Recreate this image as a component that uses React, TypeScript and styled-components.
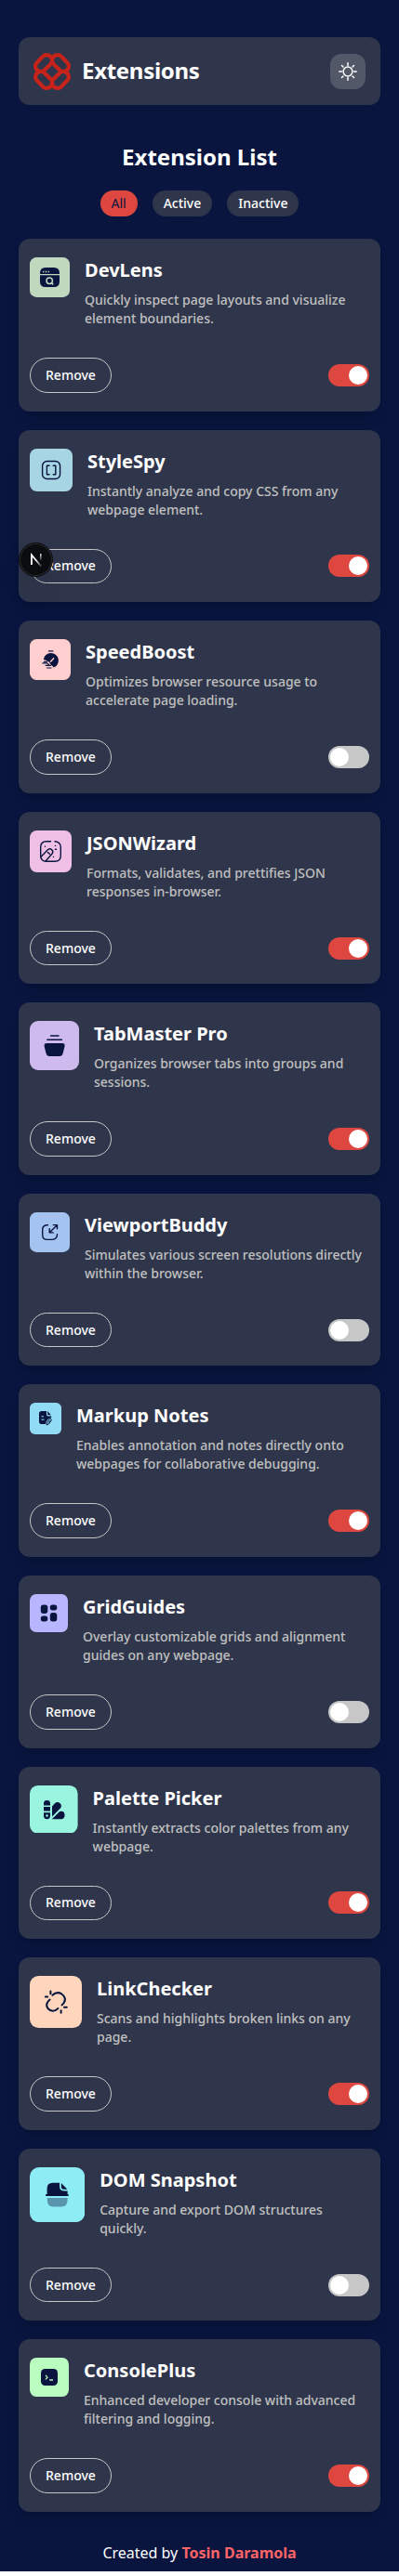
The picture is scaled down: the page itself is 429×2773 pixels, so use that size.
import React, { useState } from "react";
import styled, { createGlobalStyle } from "styled-components";

const GlobalStyle = createGlobalStyle`
  * { box-sizing: border-box; margin: 0; padding: 0; }
  html { background: #fff; }
  body { font-family: "Noto Sans", sans-serif; color: #fff; }
  button { font: inherit; color: inherit; cursor: pointer; }
`;

const navy = "#09153e";

const Page = styled.div`
  display: flex;
  flex-direction: column;
  height: 2768px;
  padding: 40px 20px 0;
  background: ${navy};
`;

const Header = styled.header`
  display: flex;
  flex: none;
  align-items: center;
  justify-content: space-between;
  height: 73px;
  padding: 0 16px;
  border-radius: 12px;
  background: #2f364b;
`;

const Brand = styled.div`
  display: flex;
  align-items: center;
  gap: 12px;
`;

const BrandName = styled.span`
  margin-top: -1px;
  font-size: 24px;
  font-weight: 700;
  letter-spacing: -0.3px;
  line-height: 40px;
`;

const ThemeButton = styled.button`
  display: grid;
  place-items: center;
  width: 38px;
  height: 38px;
  border: 0;
  border-radius: 12px;
  background: #535868;
`;

const Heading = styled.h1`
  margin-top: 40px;
  font-size: 24px;
  font-weight: 700;
  line-height: 32px;
  text-align: center;
`;

const Filters = styled.div`
  display: flex;
  justify-content: center;
  gap: 16px;
  margin: 20px 0 24px;
`;

const FilterPill = styled.button<{ $selected: boolean }>`
  height: 28px;
  padding: 0 12px;
  border: 0;
  border-radius: 14px;
  font-size: 14px;
  font-weight: ${(p) => (p.$selected ? 400 : 500)};
  line-height: 20px;
  color: ${(p) => (p.$selected ? navy : "#fff")};
  background: ${(p) => (p.$selected ? "#de473f" : "#2f364b")};
`;

const List = styled.main`
  display: flex;
  flex-direction: column;
  gap: 20px;
`;

const Card = styled.article`
  display: flex;
  flex-direction: column;
  gap: 32px;
  padding: 20px 12px;
  border-radius: 12px;
  background: #2f364b;
  box-shadow: 0 10px 15px -3px rgba(0, 0, 0, 0.1), 0 4px 6px -4px rgba(0, 0, 0, 0.1);
`;

const CardBody = styled.div`
  display: flex;
  align-items: flex-start;
  gap: 16px;
`;

const Tile = styled.svg<{ $size: number }>`
  flex: none;
  display: block;
  width: ${(p) => p.$size}px;
  height: ${(p) => p.$size}px;
`;

const CardText = styled.div`
  display: flex;
  flex-direction: column;
  gap: 8px;
`;

const CardTitle = styled.h2`
  font-size: 20px;
  font-weight: 700;
  line-height: 28px;
`;

const CardDescription = styled.p`
  font-size: 14px;
  font-weight: 500;
  line-height: 20px;
  color: #c0c0c0;
`;

const CardFooter = styled.div`
  position: relative;
  display: flex;
  align-items: center;
  justify-content: space-between;
`;

const RemoveButton = styled.button`
  height: 37.59px;
  padding: 0 16px;
  border: 1px solid #c7c7c7;
  border-radius: 19px;
  background: transparent;
  font-size: 14px;
  font-weight: 500;
  line-height: 20px;
`;

const Switch = styled.button<{ $on: boolean }>`
  display: flex;
  align-items: center;
  justify-content: ${(p) => (p.$on ? "flex-end" : "flex-start")};
  width: 44px;
  height: 24px;
  padding: 2px;
  border: 0;
  border-radius: 12px;
  background: ${(p) => (p.$on ? "#de473f" : "#c7c7c7")};
`;

const Knob = styled.span`
  width: 20px;
  height: 20px;
  border-radius: 50%;
  background: #fff;
`;

const DevBadge = styled.div`
  position: absolute;
  left: -12px;
  top: -6.5px;
  width: 37px;
  height: 37px;
  display: grid;
  place-items: center;
  border-radius: 50%;
  background: #0b0c0f;
  border: 1px solid #0b0c0f;
  box-shadow: inset 0 0 0 1px #2c2d31, 0 16px 32px -8px rgba(0, 0, 0, 0.24);
`;

const Footer = styled.footer`
  margin-top: 32px;
  font-size: 16px;
  line-height: 24px;
  text-align: center;
`;

const Author = styled.strong`
  font-weight: 700;
  color: #ff6467;
`;

const LogoMark = () => (
  <svg width="40" height="40" viewBox="0 0 40 40" fill="none" stroke="#c7231a" strokeWidth="4.2" strokeLinejoin="round">
    {[0, 90, 180, 270].map((a) => (
      <path
        key={a}
        transform={`rotate(${a} 20 20)`}
        d="M3.6 10.4L10.4 3.6Q11.9 2.1 13.8 2.1Q17.4 2.1 19 4.8Q20 6.6 20 8.4Q20 10.3 18.6 11.7L11.7 18.6Q10.3 20 8.4 20Q6.6 20 4.8 19Q2.1 17.4 2.1 13.8Q2.1 11.9 3.6 10.4Z"
      />
    ))}
  </svg>
);

const SunIcon = () => (
  <svg width="22" height="22" viewBox="0 0 22 22" fill="none" stroke="#fff" strokeWidth="1.5" strokeLinecap="round">
    <circle cx="11" cy="11" r="4.9" />
    <path d="M11 1.8v2.6M11 17.6v2.6M1.8 11h2.6M17.6 11h2.6M4.5 4.5l1.5 1.5M16 16l1.5 1.5M4.5 17.5l1.5-1.5M16 6l1.5-1.5" />
  </svg>
);

const NextMark = () => (
  <svg width="14" height="15" viewBox="0 0 14 15" fill="none" strokeWidth="1.6">
    <defs>
      <linearGradient id="diag" x1="7" y1="8" x2="12.5" y2="14.5" gradientUnits="userSpaceOnUse">
        <stop stopColor="#fff" />
        <stop offset="1" stopColor="#fff" stopOpacity="0.15" />
      </linearGradient>
      <linearGradient id="bar" x1="0" y1="1" x2="0" y2="9" gradientUnits="userSpaceOnUse">
        <stop stopColor="#fff" />
        <stop offset="1" stopColor="#fff" stopOpacity="0" />
      </linearGradient>
    </defs>
    <path d="M1.8 13V2.2L12.2 14.6" stroke="url(#diag)" />
    <path d="M1.8 13V1.4" stroke="#fff" />
    <rect x="11" y="1.2" width="1.5" height="8" fill="url(#bar)" />
  </svg>
);

type Item = {
  name: string;
  text: string;
  size: number;
  color: string;
  on: boolean;
  art: React.ReactNode;
};

const line = { fill: "none", stroke: navy, strokeLinecap: "round" as const, strokeLinejoin: "round" as const };

const items: Item[] = [
  {
    name: "DevLens",
    text: "Quickly inspect page layouts and visualize element boundaries.",
    size: 43,
    color: "#c0d8bd",
    on: true,
    art: (
      <>
        <path fill={navy} d="M11 18V17Q11 11 17 11H26Q32 11 32 17V18ZM11 19.3H32V26Q32 32 26 32H17Q11 32 11 26Z" />
        <path d="M14 15.5h1.4M16.8 15.5h1.4M19.6 15.5h1.4" stroke="#c0d8bd" strokeWidth="1.5" />
        <g fill="none" stroke="#c0d8bd" strokeWidth="1.5">
          <circle cx="21.2" cy="25.3" r="3.2" />
          <path d="M23.2 27.4L25.2 29.4" />
        </g>
      </>
    ),
  },
  {
    name: "StyleSpy",
    text: "Instantly analyze and copy CSS from any webpage element.",
    size: 46,
    color: "#a8d5e3",
    on: true,
    art: (
      <g {...line} strokeWidth="1.4">
        <rect x="13.6" y="13.5" width="19" height="19" rx="5" />
        <path d="M21 18.2H18.4V27.8H21M25.2 18.2H27.8V27.8H25.2" />
      </g>
    ),
  },
  {
    name: "SpeedBoost",
    text: "Optimizes browser resource usage to accelerate page loading.",
    size: 44,
    color: "#ffcfd0",
    on: false,
    art: (
      <>
        <path d="M14.8 22A8.1 8.1 0 1 1 25.8 30.6Q24.8 28.6 22.4 27.4Q21.4 24.4 18.6 23.6Q17 22.4 14.8 22Z" fill={navy} />
        <path d="M22.4 24.3L25.6 20.8" stroke="#ffcfd0" strokeWidth="1.3" strokeLinecap="round" />
        <path d="M20.4 12.9H24.9M15.4 24.3H18.4M13.8 25.8H18.4L20.6 27.4M17.2 28.4H22.4M18.6 31H23" {...line} strokeWidth="1.2" />
      </>
    ),
  },
  {
    name: "JSONWizard",
    text: "Formats, validates, and prettifies JSON responses in-browser.",
    size: 45,
    color: "#efbfe6",
    on: true,
    art: (
      <g {...line} strokeWidth="1.4">
        <path d="M22.5 11.8H18Q11.7 11.8 11.7 18V27Q11.7 33.3 18 33.3H27Q33.3 33.3 33.3 27V18Q33.3 12.6 27 11.8" />
        <path d="M11.9 28.6L19.6 20.6Q21.6 18.8 23.7 20.7Q25.8 22.8 24 25L17 33M19.4 23.4L21.4 25.3" />
        <path d="M16.4 17.2h.1M27.4 16.4h.1M27.4 20.3h.1M28.4 20.3h.1M25.4 28.4h.1" />
      </g>
    ),
  },
  {
    name: "TabMaster Pro",
    text: "Organizes browser tabs into groups and sessions.",
    size: 53,
    color: "#cebaed",
    on: true,
    art: (
      <>
        <path d="M18.4 24H34.8Q38.2 24 37.5 27.4L35.6 35Q34.8 38 32 38H21.2Q18.4 38 17.6 35L15.7 27.4Q15 24 18.4 24Z" fill={navy} />
        <path d="M22.6 15.9H31M18.8 20.2H34.4" {...line} strokeWidth="1.5" />
      </>
    ),
  },
  {
    name: "ViewportBuddy",
    text: "Simulates various screen resolutions directly within the browser.",
    size: 43,
    color: "#a5c3f1",
    on: false,
    art: (
      <g {...line} strokeWidth="1.4">
        <path d="M19.4 13.7Q13.7 13.7 13.7 18.5V24.2Q13.7 29.4 18.9 29.4H24.2Q29.5 29.4 29.5 23.6" />
        <path d="M21.2 21.8L29.2 13.9M25.3 13.6H29.5V17.8M21.2 17.8V21.9H25.2" />
      </g>
    ),
  },
  {
    name: "Markup Notes",
    text: "Enables annotation and notes directly onto webpages for collaborative debugging.",
    size: 34,
    color: "#91dcf4",
    on: true,
    art: (
      <>
        <path d="M12.8 9H18V12.8Q18 14.6 19.8 14.6H23.2V16.2Q19.6 16.8 17.6 20.5L17 23H12.8Q10 23 10 20.2V11.8Q10 9 12.8 9ZM19.2 9.1L22.8 13.2H20Q19.2 13.2 19.2 12.4Z" fill={navy} />
        <path d="M12.4 14.8H15M12.4 18.2H15.6" stroke="#91dcf4" strokeWidth="1" />
        <path d="M18.2 23.6L18.3 21.2L21.5 17.4Q22.8 17 23.3 18.2Q23.4 19.4 20.4 22.8ZM20.2 21.4L22 19.3" {...line} strokeWidth="1" />
      </>
    ),
  },
  {
    name: "GridGuides",
    text: "Overlay customizable grids and alignment guides on any webpage.",
    size: 41,
    color: "#b8b6ff",
    on: false,
    art: (
      <g fill={navy}>
        <rect x="11.8" y="11.6" width="7.5" height="9.3" rx="3" />
        <rect x="21.8" y="11.6" width="7.5" height="5.8" rx="2.7" />
        <rect x="11.8" y="23.6" width="7.5" height="5.8" rx="2.7" />
        <rect x="21.8" y="20" width="7.5" height="9.4" rx="3" />
      </g>
    ),
  },
  {
    name: "Palette Picker",
    text: "Instantly extracts color palettes from any webpage.",
    size: 51.6,
    color: "#99f5e0",
    on: true,
    art: (
      <g fill={navy}>
        <path d="M15 21.4V19.4Q15 16 18.5 16Q22 16 22 19.4V21.4ZM15 23H22V27.6H15ZM15 29.2H22V32.6Q22 36.2 18.5 36.2Q15 36.2 15 32.6Z" />
        <circle cx="18.5" cy="32.5" r="1.2" fill="#99f5e0" />
        <path d="M24 22.6L27.2 19Q30 16.8 32.6 19.2Q35 21.6 33 24.6L24 33.4ZM23.8 36.2L32.2 28Q37.4 26.8 37.6 32Q37.4 36.2 33.4 36.2Z" />
      </g>
    ),
  },
  {
    name: "LinkChecker",
    text: "Scans and highlights broken links on any page.",
    size: 56,
    color: "#ffd6bc",
    on: true,
    art: (
      <g {...line} strokeWidth="2">
        <path d="M24.4 20.8Q29 16.4 34 19.2Q40.2 23.6 36.6 29.2L34.6 31.4" />
        <path d="M21.6 25.6Q16 30.2 19.4 35Q24.6 40.6 30.4 35" />
        <path d="M22.4 16.4V19.2M16.8 22.4H19.2M37 33.7H39.8M33.6 37.2V39.8" />
      </g>
    ),
  },
  {
    name: "DOM Snapshot",
    text: "Capture and export DOM structures quickly.",
    size: 59.2,
    color: "#8eecf5",
    on: false,
    art: (
      <>
        <path d="M18.6 29V23Q18.6 16.8 24.8 16.8H32V20.2Q32 25.6 37.4 25.6H40.6V29H41.6V30.9H17.2V29ZM33.8 17L40.4 23.8H37.2Q33.8 23.8 33.8 20.4Z" fill={navy} />
        <path d="M18.8 33H40.6V35.6Q40.6 42.4 34 42.4H25.4Q18.8 42.4 18.8 35.6Z" fill={navy} opacity=".4" />
      </>
    ),
  },
  {
    name: "ConsolePlus",
    text: "Enhanced developer console with advanced filtering and logging.",
    size: 42,
    color: "#b9fdc1",
    on: true,
    art: (
      <>
        <rect x="12" y="12" width="18" height="18" rx="4.4" fill={navy} />
        <path d="M17 18.8L19 21.2L17 23.4M21.2 24H25" fill="none" stroke="#b9fdc1" strokeWidth="1.3" />
      </>
    ),
  },
];

const filters = ["All", "Active", "Inactive"];

export default function App() {
  const [filter, setFilter] = useState("All");
  const [states, setStates] = useState(items.map((i) => i.on));
  return (
    <Page>
      <GlobalStyle />
      <Header>
        <Brand>
          <LogoMark />
          <BrandName>Extensions</BrandName>
        </Brand>
        <ThemeButton aria-label="Toggle theme">
          <SunIcon />
        </ThemeButton>
      </Header>
      <Heading>Extension List</Heading>
      <Filters>
        {filters.map((f) => (
          <FilterPill key={f} $selected={f === filter} onClick={() => setFilter(f)}>
            {f}
          </FilterPill>
        ))}
      </Filters>
      <List>
        {items.map((item, i) =>
          filter === "All" || (filter === "Active") === states[i] ? (
            <Card key={item.name}>
              <CardBody>
                <Tile $size={item.size} viewBox={`0 0 ${item.size} ${item.size}`}>
                  <rect width={item.size} height={item.size} rx={item.size * 0.17} fill={item.color} />
                  {item.art}
                </Tile>
                <CardText>
                  <CardTitle>{item.name}</CardTitle>
                  <CardDescription>{item.text}</CardDescription>
                </CardText>
              </CardBody>
              <CardFooter>
                <RemoveButton>Remove</RemoveButton>
                <Switch
                  $on={states[i]}
                  aria-label={item.name}
                  onClick={() => setStates(states.map((s, j) => (j === i ? !s : s)))}
                >
                  <Knob />
                </Switch>
                {i === 1 && (
                  <DevBadge>
                    <NextMark />
                  </DevBadge>
                )}
              </CardFooter>
            </Card>
          ) : null
        )}
      </List>
      <Footer>
        Created by <Author>Tosin Daramola</Author>
      </Footer>
    </Page>
  );
}
